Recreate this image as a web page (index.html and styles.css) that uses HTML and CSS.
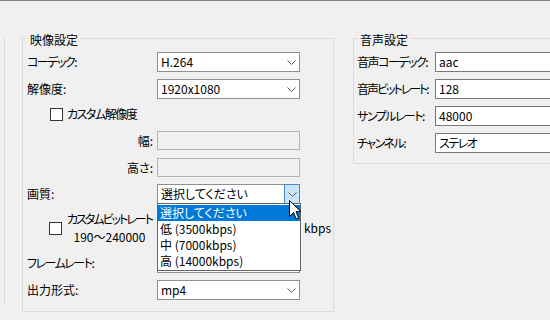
FILE: index.html
```html
<!DOCTYPE html>
<html>
<head>
<meta charset="UTF-8">
<link rel="stylesheet" href="styles.css">
</head>
<body>
<div class="TOPLINE"></div>
<div class="MAIN">
    <div class="PANEL">
        <fieldset class="GROUP VIDEO">
            <legend>映像設定</legend>
            <div class="ROW">
                <span class="LBL KANA">コーデック:</span>
                <div class="COMBO"><span class="VAL">H.264</span><span class="ARROW"><svg width="9" height="5"><polyline points="0.5,0.5 4.5,4.5 8.5,0.5"/></svg></span></div>
            </div>
            <div class="ROW">
                <span class="LBL">解像度:</span>
                <div class="COMBO"><span class="VAL">1920x1080</span><span class="ARROW"><svg width="9" height="5"><polyline points="0.5,0.5 4.5,4.5 8.5,0.5"/></svg></span></div>
            </div>
            <div class="ROW CHKROW">
                <span class="CHK"></span>
                <span class="TXT KANA">カスタム解像度</span>
            </div>
            <div class="ROW SUB">
                <span class="LBL RIGHT">幅:</span>
                <div class="EDIT DISABLED"></div>
            </div>
            <div class="ROW SUB">
                <span class="LBL RIGHT">高さ:</span>
                <div class="EDIT DISABLED"></div>
            </div>
            <div class="ROW">
                <span class="LBL">画質:</span>
                <div class="COMBO OPEN">
                    <span class="VAL">選択してください</span>
                    <span class="DROPBTN"><svg width="9" height="5"><polyline points="0.5,0.5 4.5,4.5 8.5,0.5"/></svg></span>
                    <ul class="LIST">
                        <li class="SEL">選択してください</li>
                        <li>低 (3500kbps)</li>
                        <li>中 (7000kbps)</li>
                        <li>高 (14000kbps)</li>
                    </ul>
                    <svg class="CURSOR" width="13" height="21" viewBox="0 0 13 21"><path d="M0.5,0.5 L0.5,16.5 L4.5,12.5 L7.2,18.8 L9.6,17.8 L7,11.7 L12,11.7 Z"/></svg>
                </div>
            </div>
            <div class="ROW BITROW">
                <div class="BITCHK">
                    <span class="CHK"></span>
                    <span class="BITTXT"><span class="KANA TIGHT">カスタムビットレート</span><br>190〜240000</span>
                </div>
                <div class="EDIT"></div>
                <span class="UNIT">kbps</span>
            </div>
            <div class="ROW">
                <span class="LBL KANA">フレームレート:</span>
                <div class="COMBO"><span class="VAL"></span><span class="ARROW"><svg width="9" height="5"><polyline points="0.5,0.5 4.5,4.5 8.5,0.5"/></svg></span></div>
            </div>
            <div class="ROW">
                <span class="LBL">出力形式:</span>
                <div class="COMBO"><span class="VAL">mp4</span><span class="ARROW"><svg width="9" height="5"><polyline points="0.5,0.5 4.5,4.5 8.5,0.5"/></svg></span></div>
            </div>
        </fieldset>
    </div>
    <fieldset class="GROUP AUDIO">
        <legend>音声設定</legend>
        <div class="ROW">
            <span class="ALBL KANA">音声コーデック:</span>
            <div class="EDIT WIDE">aac</div>
        </div>
        <div class="ROW">
            <span class="ALBL KANA TIGHT">音声ビットレート:</span>
            <div class="EDIT WIDE">128</div>
        </div>
        <div class="ROW">
            <span class="ALBL KANA">サンプルレート:</span>
            <div class="EDIT WIDE">48000</div>
        </div>
        <div class="ROW">
            <span class="ALBL KANA">チャンネル:</span>
            <div class="EDIT WIDE KANA">ステレオ</div>
        </div>
    </fieldset>
</div>
</body>
</html>
```

FILE: styles.css
```css
html, body {
    margin: 0;
    background: #f0f0f0;
    overflow: hidden;
}
body {
    font-family: "Noto Sans CJK JP", sans-serif;
    font-size: 12px;
    line-height: 16px;
    color: #000;
    font-feature-settings: "palt";
    width: 550px;
    height: 320px;
}
.KANA {
    letter-spacing: -1.5px;
}
.KANA.TIGHT {
    letter-spacing: -2px;
}
.TOPLINE {
    height: 1px;
    background: #838383;
}
.MAIN {
    display: flex;
    align-items: flex-start;
    padding-top: 37px;
}
.PANEL {
    margin-left: 4px;
    padding-left: 17px;
    height: 266px;
    border-left: 1px solid #d9d9d9;
}
fieldset.GROUP {
    margin: -10px 0 0 0;
    min-width: 0;
    border: 1px solid #dcdcdc;
    box-sizing: border-box;
}
fieldset.VIDEO {
    width: 312px;
    padding: 4px 0 11px 4px;
}
fieldset.AUDIO {
    margin-left: 19px;
    width: 260px;
    flex: none;
    padding: 4px 0 10px 3px;
}
legend {
    padding: 4px 2px 0;
    margin-left: 1px;
    line-height: 16px;
}
.ROW {
    display: flex;
    align-items: center;
    height: 20px;
    margin-top: 7px;
}
.ROW:first-of-type {
    margin-top: 0;
}
.LBL {
    width: 130px;
    flex: none;
}
.LBL.RIGHT {
    width: 126px;
    margin-right: 4px;
    text-align: right;
}
.ALBL {
    width: 78px;
    flex: none;
    white-space: nowrap;
}
.COMBO {
    position: relative;
    width: 143px;
    height: 20px;
    box-sizing: border-box;
    border: 1px solid #8f8f8f;
    background: #fff;
    display: flex;
    align-items: center;
    padding-left: 3px;
}
.VAL {
    flex: 1;
    white-space: nowrap;
}
.ARROW, .DROPBTN {
    width: 16px;
    height: 18px;
    display: flex;
    align-items: center;
    justify-content: center;
}
.DROPBTN {
    box-sizing: border-box;
    height: 20px;
    margin: -1px -1px -1px 0;
    background: #cce4f7;
    border: 1px solid #3d8ad6;
}
.ARROW svg, .DROPBTN svg {
    fill: none;
    stroke: #606060;
    stroke-width: 1;
}
.CHKROW {
    height: 18px;
    margin-top: 6px;
    padding-left: 23px;
}
.CHK {
    width: 13px;
    height: 13px;
    box-sizing: border-box;
    border: 1px solid #333;
    background: #fff;
    flex: none;
}
.CHKROW .TXT {
    margin-left: 4px;
}
.SUB {
    height: 19px;
    margin-top: 8px;
}
.EDIT {
    width: 143px;
    height: 20px;
    box-sizing: border-box;
    border: 1px solid #7a7a7a;
    background: #fff;
    padding-left: 3px;
    line-height: 18px;
    flex: none;
}
.EDIT.DISABLED {
    height: 19px;
    border-color: #b4b4b4;
    background: #f0f0f0;
}
.EDIT.WIDE {
    width: 170px;
}
.BITROW {
    height: 36px;
    margin-top: 6px;
}
.BITCHK {
    width: 108px;
    flex: none;
    display: flex;
    align-items: center;
    padding-left: 22px;
}
.BITTXT {
    margin-left: 5px;
    text-align: center;
    line-height: 18px;
    white-space: nowrap;
}
.UNIT {
    margin-left: 4px;
}
.LIST {
    position: absolute;
    top: 18px;
    left: -1px;
    width: 144px;
    box-sizing: border-box;
    margin: 0;
    padding: 1px 0;
    list-style: none;
    border: 1px solid #646464;
    background: #fff;
    z-index: 2;
}
.LIST li {
    height: 16px;
    line-height: 16px;
    padding-left: 2px;
    white-space: nowrap;
}
.LIST li.SEL {
    background: #0078d7;
    color: #fff;
}
.CURSOR {
    position: absolute;
    top: 15px;
    left: 131px;
    z-index: 3;
    fill: #fff;
    stroke: #000;
    stroke-width: 1;
}
```
